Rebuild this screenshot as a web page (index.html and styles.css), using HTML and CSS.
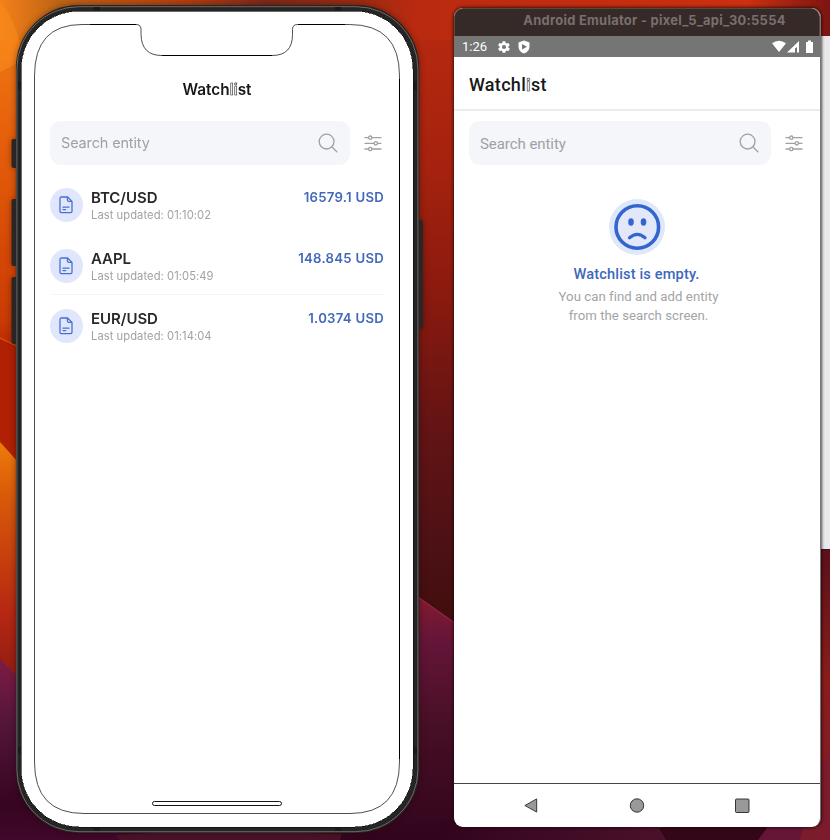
FILE: index.html
```html
<!DOCTYPE html>
<html lang="en">
<head>
<meta charset="utf-8">
<title>Watchlist</title>
<link rel="stylesheet" href="styles.css">
</head>
<body>
<svg width="0" height="0" class="defs" aria-hidden="true">
  <symbol id="search" viewBox="0 0 20 20"><g fill="none" stroke="#a0a1a5" stroke-width="1.3" stroke-linecap="round"><circle cx="8.6" cy="8.6" r="7.4"/><path d="M14 14l4.800 4.800"/></g></symbol>
  <symbol id="filter" viewBox="0 0 18 17"><g fill="none" stroke="#a0a1a5" stroke-width="1.3" stroke-linecap="round"><path d="M1 2.700h3.500M8 2.700h9M1 8.300h9M13.500 8.300H17M1 14h3.500M8 14h9"/><circle cx="6.300" cy="2.700" r="1.700"/><circle cx="11.800" cy="8.300" r="1.700"/><circle cx="6.300" cy="14" r="1.700"/></g></symbol>
  <symbol id="doc" viewBox="0 0 14 18"><g fill="none" stroke="#4670d2" stroke-width="1.300" stroke-linejoin="round" stroke-linecap="round"><path d="M8.600 1H2.400Q1 1 1 2.400v12.800q0 1.400 1.400 1.400h9.200q1.400 0 1.400-1.400V5.400zM8.400 1v2.800q0 1.600 1.600 1.600h3M4 11.200h6M4 13.600h2.700"/></g></symbol>
</svg>
<main class="desktop">
  <svg class="wallpaper" viewBox="0 0 830 840" preserveAspectRatio="none" aria-hidden="true">
    <defs>
      <linearGradient id="leftBase" x1="0" y1="0" x2="0" y2="1"><stop offset="0" stop-color="#f08018"/><stop offset=".16" stop-color="#e7600b"/><stop offset=".38" stop-color="#ca3b04"/><stop offset=".41" stop-color="#bc2b05"/><stop offset=".54" stop-color="#981505"/></linearGradient>
      <linearGradient id="topBase" x1="0" y1="0" x2="1" y2="0"><stop offset="0" stop-color="#f58018"/><stop offset=".07" stop-color="#bd6416"/><stop offset=".22" stop-color="#b34012"/><stop offset=".32" stop-color="#7e2917"/><stop offset=".42" stop-color="#962b12"/><stop offset=".5" stop-color="#b92a10"/><stop offset=".9" stop-color="#cb300f"/><stop offset="1" stop-color="#7c1512"/></linearGradient>
      <linearGradient id="midBase" x1="0" y1="0" x2="0" y2="1"><stop offset="0" stop-color="#b92a10"/><stop offset=".2" stop-color="#a5220e"/><stop offset=".36" stop-color="#89190f"/><stop offset=".5" stop-color="#651414"/><stop offset=".65" stop-color="#4c1115"/><stop offset=".74" stop-color="#420d0d"/></linearGradient>
      <linearGradient id="amber" x1="0" y1="0" x2="0" y2="1"><stop offset="0" stop-color="#ee7b0b"/><stop offset=".2" stop-color="#d95b09"/><stop offset=".65" stop-color="#b62812"/><stop offset="1" stop-color="#811813"/></linearGradient>
      <linearGradient id="plum" x1="0" y1="0" x2="0" y2="1"><stop offset="0" stop-color="#7e1b45"/><stop offset=".35" stop-color="#54163a"/><stop offset=".8" stop-color="#360520"/><stop offset="1" stop-color="#40082a"/></linearGradient>
      <linearGradient id="plum2" x1="0" y1="0" x2="0" y2="1"><stop offset="0" stop-color="#861c30"/><stop offset=".2" stop-color="#651538"/><stop offset=".55" stop-color="#460f25"/><stop offset="1" stop-color="#32051d"/></linearGradient>
      <linearGradient id="floor" x1="0" y1="0" x2="1" y2="0"><stop offset="0" stop-color="#32051d"/><stop offset="1" stop-color="#4c112b"/></linearGradient>
      <linearGradient id="rightBase" x1="0" y1="0" x2="0" y2="1"><stop offset="0" stop-color="#5c101b"/><stop offset=".45" stop-color="#8a1c1b"/><stop offset="1" stop-color="#7c1d2c"/></linearGradient>
    </defs>
    <path fill="#360520" d="M0 0h830v840H0z"/>
    <path fill="url(#leftBase)" d="M0 0h210v840H0z"/>
    <path fill="url(#midBase)" d="M210 0h250v840H210z"/>
    <path fill="url(#topBase)" d="M0 0h830v40H0z"/>
    <path fill="#f98a1a" opacity=".65" d="M0 2Q18 22 23 60L0 72z"/>
    <path fill="#d04b08" d="M0 337l28 14V460L0 428z"/>
    <path fill="#af2005" d="M0 339l28 13V475L0 445z"/>
    <path fill="url(#amber)" d="M0 442l28 31v230H0z"/>
    <path fill="url(#plum)" d="M0 659l28 28 170 153H0z"/>
    <path fill="#49132a" d="M115 835l105-6 240 11H120z"/>
    <path fill="url(#plum2)" d="M410 591l50 35v214H340z"/>
    <path stroke="#a42740" d="M418 597l38 27"/>
    <path fill="url(#floor)" d="M440 820h219l10 20H440z"/>
    <path fill="#330718" d="M659 828h110l-12 12h-91z"/>
    <path fill="url(#rightBase)" d="M818 549h12v291h-12z"/>
    <path fill="#651637" d="M770 824h60v16h-72z"/>
    <path fill="#7b1b2c" d="M820 766l10-10v84h-30z"/>
  </svg>

  <div class="back-window"></div>

  <section class="phone">
    <svg class="phone-art" viewBox="0 0 415 835" aria-hidden="true">
      <g fill="#292625"><rect x="1.500" y="139" width="7" height="29" rx="2"/><rect x="1.500" y="199" width="7" height="67" rx="2"/><rect x="1.500" y="277" width="7" height="67" rx="2"/><rect x="405" y="220" width="8" height="109" rx="2"/></g>
      <rect x="7.100" y="6.200" width="401" height="825.600" rx="62" fill="#252524" stroke="#292423" stroke-width="2.400"/>
      <rect x="6.900" y="6.700" width="401" height="825" rx="62" fill="none" stroke="#747170" stroke-width=".9"/>
      <path fill="#1c1a1a" d="M84 7h6v4h-6zM325 7h6v4h-6zM8 81h3v9H8zM404 81h3v9h-3zM8 747h3v7H8zM404 747h3v7h-3zM84 828h6v3h-6zM325 828h6v3h-6z"/>
      <rect x="11" y="11" width="392" height="816" rx="58" fill="#fff" stroke="#080808" stroke-width=".6" shape-rendering="crispEdges"/>
      <path class="bezel" d="M24.500 76Q24.500 24.500 72 24.500h54q5 0 5 5v5Q131.500 55.500 152 55.500h110q20.500 0 20.500-21v-5q0-5 5-5h52Q389.500 24.500 389.500 76V762Q389.500 813.500 340 813.500H74Q24.500 813.500 24.500 762z"/>
      <path stroke="#000" d="M389.500 79V759" shape-rendering="crispEdges"/>
      <path stroke="#000" d="M80 24.500h46M152 55.500h110M288 24.500h47" shape-rendering="crispEdges"/>
    </svg>
    <div class="phone-screen">
      <h1 class="ios-title">Watch<span class="hollow">li</span>st</h1>
      <div class="search-row">
        <div class="search-box"><span class="placeholder">Search entity</span><svg class="search-icon"><use href="#search"/></svg></div>
        <svg class="filter-icon"><use href="#filter"/></svg>
      </div>
      <ul class="entities">
        <li class="entity"><span class="badge"><svg><use href="#doc"/></svg></span><div class="info"><b class="pair">BTC/USD</b><small class="time">Last updated: 01:10:02</small></div><strong class="price">16579.1 USD</strong></li>
        <li class="entity ruled"><span class="badge"><svg><use href="#doc"/></svg></span><div class="info"><b class="pair">AAPL</b><small class="time">Last updated: 01:05:49</small></div><strong class="price">148.845 USD</strong></li>
        <li class="entity"><span class="badge"><svg><use href="#doc"/></svg></span><div class="info"><b class="pair">EUR/USD</b><small class="time">Last updated: 01:14:04</small></div><strong class="price">1.0374 USD</strong></li>
      </ul>
      <div class="home-bar"></div>
    </div>
  </section>

  <section class="emulator">
    <header class="window-title"><span>Android Emulator - pixel_5_api_30:5554</span></header>
    <div class="status">
      <span class="clock">1:26</span>
      <svg class="gear" viewBox="0 0 24 24"><path fill="#fff" fill-rule="evenodd" d="M19.400 13a7.800 7.800 0 0 0 0-2l2.100-1.700c.2-.1.3-.4.1-.6l-2-3.500c-.1-.2-.4-.3-.6-.2l-2.500 1a7.300 7.300 0 0 0-1.700-1l-.4-2.600a.5.5 0 0 0-.5-.4h-4c-.2 0-.4.200-.5.400L9 5a7.700 7.700 0 0 0-1.700 1l-2.500-1c-.2-.1-.5 0-.6.200l-2 3.500c-.1.200-.1.500.1.600L4.500 11a7.800 7.800 0 0 0 0 2l-2.200 1.700c-.2.100-.2.400-.1.600l2 3.500c.1.200.4.300.6.200l2.500-1a7.300 7.300 0 0 0 1.700 1l.4 2.600c.1.200.3.400.5.400h4c.2 0 .4-.2.500-.4L15 19a7.700 7.700 0 0 0 1.700-1l2.500 1c.2.100.5 0 .6-.2l2-3.500c.1-.2.100-.5-.1-.6zM12 15.500a3.500 3.500 0 1 1 0-7 3.500 3.500 0 0 1 0 7z"/></svg>
      <svg class="shield" viewBox="0 0 12 14"><path fill="#fff" fill-rule="evenodd" d="M6 .5L.5 2.500v4.200c0 3 2.300 5.700 5.500 6.800 3.200-1.100 5.500-3.800 5.500-6.800V2.500zM4 4l5 2.800-5 2.800z"/></svg>
      <svg class="signals" viewBox="0 0 42 14"><g fill="#fff"><path d="M0 3.300Q7-1.700 14 3.300L7 12zM15 12.500L27 1v11.500h-2V7l-2 1.500v4z"/><path d="M34 2h2V.5h3V2h2v11h-7z"/></g></svg>
    </div>
    <header class="app-bar"><h2>Watchl<span class="hollow">i</span>st</h2></header>
    <div class="android-content">
      <div class="search-row">
        <div class="search-box"><span class="placeholder">Search entity</span><svg class="search-icon"><use href="#search"/></svg></div>
        <svg class="filter-icon"><use href="#filter"/></svg>
      </div>
      <div class="empty">
        <svg class="sad" viewBox="0 0 56 56"><circle cx="28" cy="28" r="28" fill="#dfe7fb"/><circle cx="28.300" cy="28" r="21.300" fill="#e2e7fa" stroke="#3365cf" stroke-width="3.600"/><ellipse cx="22" cy="23" rx="2.800" ry="3.700" fill="#3365cf"/><ellipse cx="34.500" cy="23" rx="2.800" ry="3.700" fill="#3365cf"/><path d="M20.500 38.700Q28.300 32 36 38.700" fill="none" stroke="#3365cf" stroke-width="3.200" stroke-linecap="round"/></svg>
        <h3>Watchlist is empty.</h3>
        <p>You can find and add entity<br>from the search screen.</p>
      </div>
    </div>
    <nav class="nav">
      <svg viewBox="0 0 16 18"><path d="M14 2v14L1.500 9z"/></svg>
      <svg viewBox="0 0 16 16"><circle cx="8" cy="8" r="6.700"/></svg>
      <svg viewBox="0 0 16 16"><rect x="1.500" y="1.500" width="13.500" height="13.500" rx="1"/></svg>
    </nav>
  </section>
</main>
</body>
</html>
```

FILE: styles.css
```css
* { box-sizing: border-box; }
body { margin: 0; }
h1, h2, h3, p, ul { margin: 0; padding: 0; }
svg { display: block; flex: none; }
.defs { position: absolute; }
.desktop { position: relative; width: 830px; height: 840px; overflow: hidden; font-family: Inter, "Liberation Sans", sans-serif; }
.wallpaper { position: absolute; inset: 0; width: 830px; height: 840px; }
.back-window { position: absolute; left: 800px; top: 36px; width: 40px; height: 514px; background: #e9e9eb; border-bottom: 1px solid #35191a; }

.phone { position: absolute; left: 10px; top: 0; width: 415px; height: 835px; filter: drop-shadow(0 0 3px rgba(20, 0, 0, .4)); }
.phone-art { position: absolute; inset: 0; width: 415px; height: 835px; }
.bezel { fill: #fff; stroke: #222; stroke-width: .8; }
.phone-screen { position: relative; display: flex; flex-direction: column; margin-left: 25px; width: 364px; height: 813px; padding: 80px 15px 0; }
.ios-title { height: 20px; margin-bottom: 21px; text-align: center; font-size: 15.300px; line-height: 20px; font-weight: 600; letter-spacing: 0; color: #17171a; }
.hollow { color: #fff; -webkit-text-stroke: .6px #222; }

.search-row { display: flex; align-items: center; gap: 14px; height: 44px; }
.search-box { flex: 1; display: flex; align-items: center; justify-content: space-between; height: 44px; padding: 0 12px 0 11px; border-radius: 11px; background: #f4f6fa; }
.placeholder { font-size: 14.500px; letter-spacing: -.15px; color: #a0a1a5; white-space: nowrap; }
.search-icon { width: 20px; height: 20px; }
.filter-icon { width: 18px; height: 17px; margin-right: 2px; }
.phone .search-box { flex: 0 0 300px; }
.phone .placeholder { padding-bottom: 1px; }
.phone .filter-icon { margin-right: 0; }

.entities { list-style: none; margin-top: 9px; }
.entity { display: flex; height: 60.700px; padding-top: 14px; align-items: flex-start; }
.ruled { background: linear-gradient(#f4f4f5, #f4f4f5) 2px 100% / 100% 1px no-repeat; }
.badge { display: flex; align-items: center; justify-content: center; width: 33px; height: 34px; padding-right: 1px; border-radius: 50%; background: #e0e7fc; }
.badge svg { width: 14px; height: 18px; }
.info { display: flex; flex-direction: column; flex: 1; margin: 0 0 0 8px; }
.pair { height: 20px; font-size: 15px; line-height: 19px; font-weight: 600; color: #29292c; letter-spacing: -.05px; }
.time { font-size: 11.200px; line-height: 14px; letter-spacing: .06px; color: #a1a2a5; }
.price { font-size: 13.200px; line-height: 18px; font-weight: 600; color: #4368ba; letter-spacing: .25px; }
.home-bar { width: 130px; height: 5px; margin: auto auto 7px; border: 1px solid #151515; border-radius: 3px; background: #fff; }

.emulator { position: absolute; left: 454px; top: 8px; width: 367px; height: 819px; display: flex; flex-direction: column; overflow: hidden; border-radius: 9px; background: #fff; border-right: 1px solid #777; font-family: Roboto, sans-serif; box-shadow: 0 0 3px 1px rgba(25, 5, 5, .7); }
.window-title { height: 28px; flex: none; display: flex; justify-content: center; padding-left: 35px; background: #352a27; border: 1px solid #574844; border-bottom: 0; border-radius: 9px 9px 0 0; color: #796f6e; font: 700 12.900px/23px Inter, sans-serif; letter-spacing: .29px; white-space: nowrap; }
.status { flex: none; height: 21px; display: flex; align-items: center; padding: 0 6px 0 8px; background: #757575; color: #fff; font-size: 13px; }
.clock { width: 35px; }
.gear { width: 14px; height: 14px; }
.shield { width: 12px; height: 14px; margin-left: 7px; }
.signals { width: 42px; height: 14px; margin-left: auto; }
.app-bar { height: 54px; flex: none; padding: 17px 15px 0; border-bottom: 2px solid #ececec; }
.app-bar h2 { font-size: 18px; line-height: 21px; font-weight: 500; color: #18181a; letter-spacing: .3px; }
.android-content { flex: 1; padding: 10px 15px 0 15px; }
.emulator .search-box .placeholder { padding-top: 2px; font-size: 15px; letter-spacing: -.06px; }
.empty { display: flex; flex-direction: column; align-items: center; padding: 34px 1px 0 0; text-align: center; }
.sad { width: 56px; height: 56px; }
.empty h3 { margin-top: 9px; font-size: 14.600px; line-height: 20px; font-weight: 500; color: #3d68bc; letter-spacing: .15px; }
.empty p { margin-top: 4px; padding-left: 4px; font-size: 13.200px; line-height: 18.500px; color: #a3a4a6; letter-spacing: .04px; }
.nav { flex: none; height: 44px; border-top: 1px solid #444; display: flex; align-items: center; justify-content: space-between; padding: 0 70px 0 69px; }
.nav svg { width: 16px; height: 17px; fill: #999; stroke: #242424; stroke-width: .9; }
```
